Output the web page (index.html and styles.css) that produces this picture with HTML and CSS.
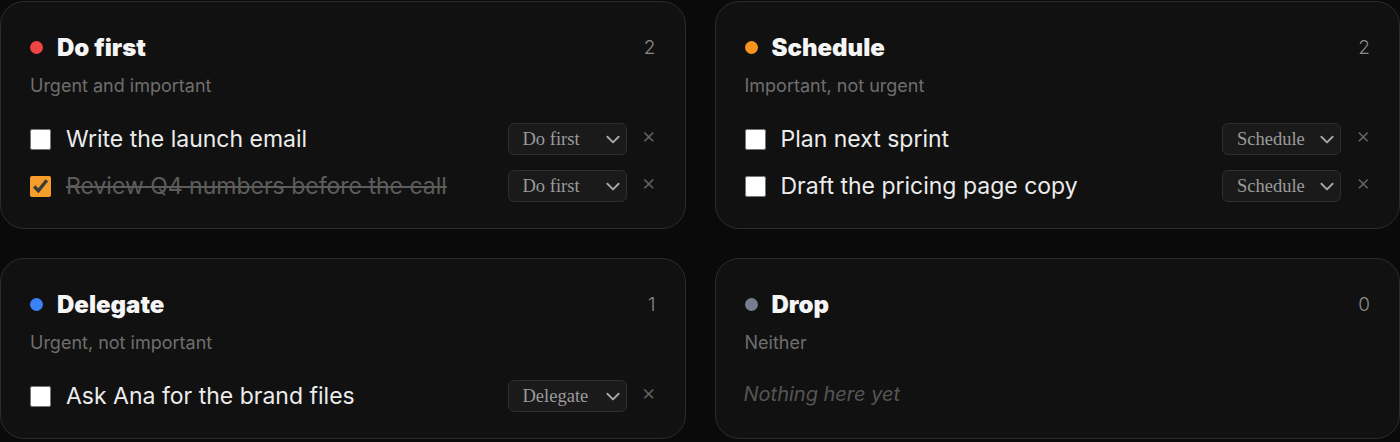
FILE: index.html
```html
<!DOCTYPE html>
<html lang="en">
<head>
  <meta charset="UTF-8" />
  <title>Priority Matrix</title>
  <meta name="viewport" content="width=device-width, initial-scale=1.0" />
  <link rel="stylesheet" href="styles.css">
</head>
<body>

<div class="matrix">

  <!-- Do first -->
  <section class="quadrant">
    <div class="quad-head">
      <span class="dot red"></span>
      <h2>Do first</h2>
      <span class="count">2</span>
    </div>
    <p class="quad-sub">Urgent and important</p>
    <ul class="tasks">
      <li class="task">
        <input type="checkbox" />
        <span class="task-text">Write the launch email</span>
        <div class="pick">
          <select><option>Do first</option><option>Schedule</option><option>Delegate</option><option>Drop</option></select>
          <svg viewBox="0 0 16 16"><path d="M3 6l5 5 5-5" /></svg>
        </div>
        <button class="remove">×</button>
      </li>
      <li class="task done">
        <input type="checkbox" checked />
        <span class="task-text">Review Q4 numbers before the call</span>
        <div class="pick">
          <select><option>Do first</option><option>Schedule</option><option>Delegate</option><option>Drop</option></select>
          <svg viewBox="0 0 16 16"><path d="M3 6l5 5 5-5" /></svg>
        </div>
        <button class="remove">×</button>
      </li>
    </ul>
  </section>

  <!-- Schedule -->
  <section class="quadrant">
    <div class="quad-head">
      <span class="dot orange"></span>
      <h2>Schedule</h2>
      <span class="count">2</span>
    </div>
    <p class="quad-sub">Important, not urgent</p>
    <ul class="tasks">
      <li class="task">
        <input type="checkbox" />
        <span class="task-text">Plan next sprint</span>
        <div class="pick">
          <select><option>Schedule</option><option>Do first</option><option>Delegate</option><option>Drop</option></select>
          <svg viewBox="0 0 16 16"><path d="M3 6l5 5 5-5" /></svg>
        </div>
        <button class="remove">×</button>
      </li>
      <li class="task">
        <input type="checkbox" />
        <span class="task-text">Draft the pricing page copy</span>
        <div class="pick">
          <select><option>Schedule</option><option>Do first</option><option>Delegate</option><option>Drop</option></select>
          <svg viewBox="0 0 16 16"><path d="M3 6l5 5 5-5" /></svg>
        </div>
        <button class="remove">×</button>
      </li>
    </ul>
  </section>

  <!-- Delegate -->
  <section class="quadrant">
    <div class="quad-head">
      <span class="dot blue"></span>
      <h2>Delegate</h2>
      <span class="count">1</span>
    </div>
    <p class="quad-sub">Urgent, not important</p>
    <ul class="tasks">
      <li class="task">
        <input type="checkbox" />
        <span class="task-text">Ask Ana for the brand files</span>
        <div class="pick">
          <select><option>Delegate</option><option>Do first</option><option>Schedule</option><option>Drop</option></select>
          <svg viewBox="0 0 16 16"><path d="M3 6l5 5 5-5" /></svg>
        </div>
        <button class="remove">×</button>
      </li>
    </ul>
  </section>

  <!-- Drop -->
  <section class="quadrant">
    <div class="quad-head">
      <span class="dot gray"></span>
      <h2>Drop</h2>
      <span class="count">0</span>
    </div>
    <p class="quad-sub">Neither</p>
    <ul class="tasks">
      <li class="empty">Nothing here yet</li>
    </ul>
  </section>

</div>

</body>
</html>
```

FILE: styles.css
```css
body {
  margin: 0;
  background: #0a0a0a;
  color: #e8e8e8;
  font-family: Inter, 'Noto Sans', sans-serif;
}

.matrix {
  display: grid;
  grid-template-columns: 1fr 1fr;
  gap: 29px 29px;
  padding-top: 1px;
}

.quadrant {
  background: #111111;
  border: 1px solid #2c2c2c;
  border-radius: 24px;
  padding: 28px 28px 26px 28px;
}

.quad-head {
  display: flex;
  align-items: center;
  height: 34px;
}

.dot {
  width: 13px;
  height: 13px;
  border-radius: 50%;
  margin-right: 14px;
  margin-left: 1px;
}

.dot.red { background: #ef4444; }
.dot.orange { background: #f7941d; }
.dot.blue { background: #3b82f6; }
.dot.gray { background: #767d8c; }

.quad-head h2 {
  margin: 0;
  font-size: 24px;
  font-weight: 900;
  color: #f5f5f5;
}

.count {
  margin-left: auto;
  font-size: 19px;
  font-weight: 300;
  color: #8a8a8a;
  margin-right: 1px;
}

.quad-sub {
  margin: 10px 0 0 1px;
  font-size: 18px;
  line-height: 24px;
  color: #6e6e6e;
}

.tasks {
  list-style: none;
  margin: 25px 0 0 0;
  padding: 0;
  display: flex;
  flex-direction: column;
  gap: 15px;
}

.task {
  display: flex;
  align-items: center;
  height: 32px;
}

.task input[type="checkbox"] {
  width: 21px;
  height: 21px;
  margin: 0 15px 0 1px;
  accent-color: #f59e2a;
  flex-shrink: 0;
}

.task-text {
  flex: 1;
  font-size: 23px;
  color: #ececec;
}

.task.done .task-text {
  color: #5c5c5c;
  text-decoration: line-through;
}

.pick {
  position: relative;
  width: 119px;
  height: 32px;
}

.pick select {
  appearance: none;
  width: 100%;
  height: 100%;
  background: #1a1a1a;
  border: 1px solid #2e2e2e;
  border-radius: 6px;
  color: #9a9a9a;
  font-family: 'Liberation Serif', 'DejaVu Serif', serif;
  font-size: 18.5px;
  padding: 0 0 0 14px;
}

.pick svg {
  position: absolute;
  right: 5px;
  top: 7px;
  width: 18px;
  height: 18px;
  fill: none;
  stroke: #a8a8a8;
  stroke-width: 1.7;
  stroke-linecap: round;
  stroke-linejoin: round;
  pointer-events: none;
}

.remove {
  background: none;
  border: none;
  color: #666;
  font-size: 22px;
  font-weight: 300;
  line-height: 1;
  padding: 0;
  margin: -8px 1px 0 15px;
  width: 14px;
  cursor: pointer;
  font-family: Inter, sans-serif;
}

.empty {
  height: 32px;
  display: flex;
  align-items: center;
  margin-top: -2px;
  font-size: 20px;
  font-style: italic;
  color: #555;
}
```
